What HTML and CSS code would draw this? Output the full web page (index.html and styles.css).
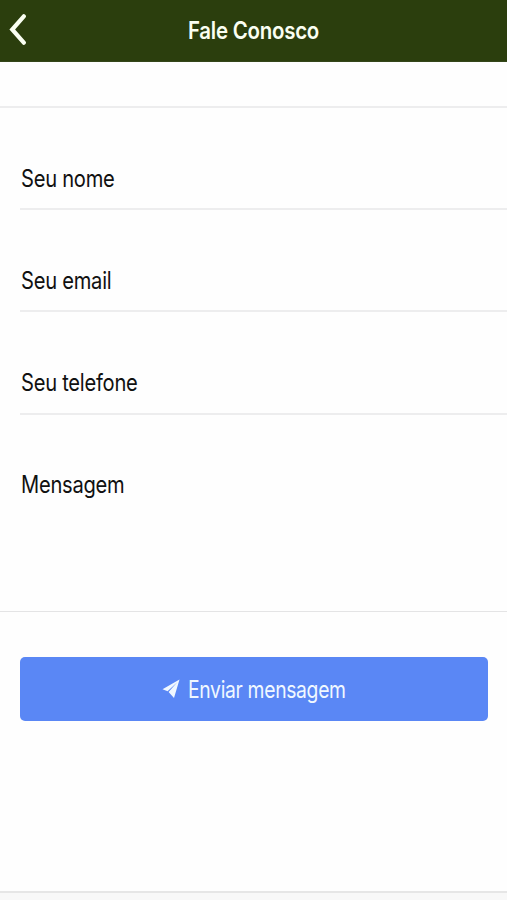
FILE: index.html
```html
<!DOCTYPE html>
<html lang="pt-BR">
<head>
    <meta charset="UTF-8">
    <title>Fale Conosco</title>
    <link rel="stylesheet" href="styles.css">
</head>
<body>
    <header class="header">
        <svg class="back" viewBox="0 0 18 32">
            <path d="M14.8 3.3 L3.2 16.5 L14.8 29.7" />
        </svg>
        <h1 class="title">Fale Conosco</h1>
    </header>

    <main class="content">
        <form class="form">
            <div class="list">
                <label class="item"><span class="label">Seu nome</span></label>
                <label class="item"><span class="label">Seu email</span></label>
                <label class="item"><span class="label">Seu telefone</span></label>
                <label class="item message"><span class="label">Mensagem</span></label>
            </div>
            <button type="button" class="send">
                <svg class="plane" viewBox="0 0 18 20">
                    <path d="M17.5 0.5 L0.5 10.3 L5.6 12.3 L15.2 3.3 L6.6 12.9 L12 19 Z" />
                </svg>
                <span class="send-text">Enviar mensagem</span>
            </button>
        </form>
    </main>

    <footer class="footer"></footer>
</body>
</html>
```
FILE: styles.css
```css
* {
    box-sizing: border-box;
}

body {
    display: flex;
    flex-direction: column;
    height: 900px;
    margin: 0;
    overflow: hidden;
    background-color: #fefefe;
    color: #111;
    font-family: Inter, "Liberation Sans", sans-serif;
    font-size: 24px;
    letter-spacing: -0.3px;
}

.header {
    display: grid;
    grid-template-columns: 40px 1fr 40px;
    align-items: center;
    height: 62px;
    border-bottom: 1px solid #34461a;
    background-color: #2b3e0d;
    color: #fafff2;
}

.back {
    width: 18px;
    height: 32px;
    margin: -3px 0 0 9px;
    fill: none;
    stroke: #fafff2;
    stroke-width: 4.2;
    stroke-linecap: round;
}

.title {
    margin: 0;
    padding-top: 1px;
    font-size: 24px;
    font-weight: 600;
    line-height: 30px;
    text-align: center;
    white-space: nowrap;
    transform: scaleX(0.853);
}

.content {
    flex: 1;
    padding-top: 44px;
}

.list {
    border-top: 2px solid #ededee;
    border-bottom: 1px solid #e4e4e5;
}

.item {
    display: block;
    height: 102.2px;
    margin-left: 20px;
    padding: 55.5px 0 0 0.5px;
    border-bottom: 2px solid #ededee;
}

.message {
    height: 196.4px;
    border-bottom: none;
}

.label {
    display: inline-block;
    line-height: 30px;
    white-space: nowrap;
    transform: scaleX(0.839);
    transform-origin: left center;
}

.send {
    display: flex;
    align-items: center;
    width: 467.5px;
    height: 64px;
    margin: 45.5px 0 0 20px;
    padding: 1px 0 0 142px;
    border: none;
    border-radius: 5px;
    background-color: #5a87f5;
    color: #f0f8ff;
    font-family: inherit;
    font-size: 24px;
    letter-spacing: -0.4px;
}

.plane {
    flex: none;
    width: 18px;
    height: 20px;
    margin: -1px 7.5px 0 0;
    fill: #f0f8ff;
}

.send-text {
    white-space: nowrap;
    transform: scaleX(0.805);
    transform-origin: left center;
}

.footer {
    height: 9px;
    border-top: 2px solid #e6e6e6;
    background-color: #f8f8f8;
}
```
